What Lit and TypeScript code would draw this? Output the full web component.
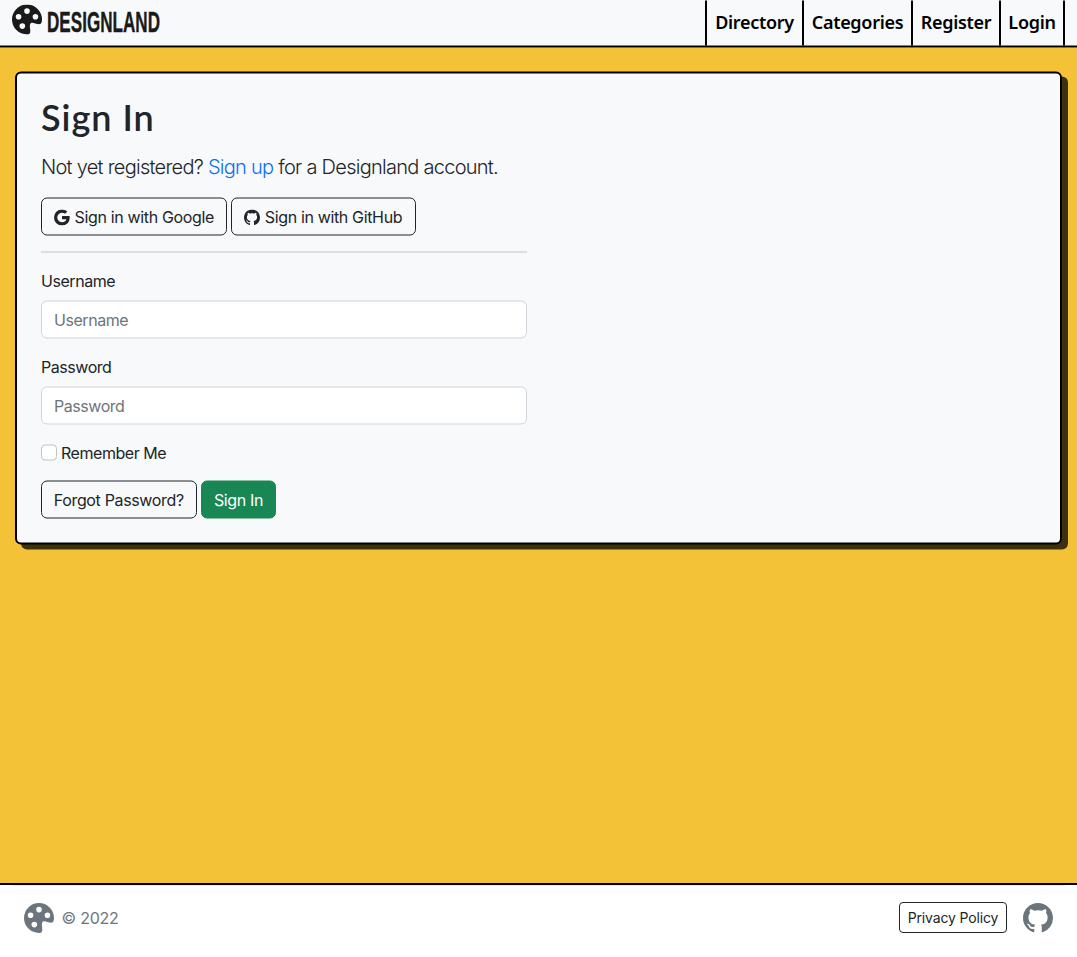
import { LitElement, html, css, svg } from "lit";
import { customElement } from "lit/decorators.js";

const PALETTE = svg`<path d="M12.433 10.07C14.133 10.585 16 11.15 16 8a8 8 0 1 0-8 8c1.996 0 1.826-1.504 1.649-3.08-.124-1.101-.252-2.237.351-2.92.465-.527 1.42-.237 2.433.07zM8 5a1.5 1.5 0 1 1 0-3 1.5 1.5 0 0 1 0 3zm4.5 3a1.5 1.5 0 1 1 0-3 1.5 1.5 0 0 1 0 3zM5 6.5a1.5 1.5 0 1 1-3 0 1.5 1.5 0 0 1 3 0zm.5 6.5a1.5 1.5 0 1 1 0-3 1.5 1.5 0 0 1 0 3z"/>`;
const GITHUB = svg`<path d="M8 0C3.58 0 0 3.58 0 8c0 3.54 2.29 6.53 5.47 7.59.4.07.55-.17.55-.38 0-.19-.01-.82-.01-1.49-2.01.37-2.53-.49-2.69-.94-.09-.23-.48-.94-.82-1.13-.28-.15-.68-.52-.01-.53.63-.01 1.08.58 1.23.82.72 1.21 1.87.87 2.33.66.07-.52.28-.87.51-1.07-1.78-.2-3.64-.89-3.64-3.95 0-.87.31-1.59.82-2.15-.08-.2-.36-1.02.08-2.12 0 0 .67-.21 2.2.82.64-.18 1.32-.27 2-.27.68 0 1.36.09 2 .27 1.53-1.04 2.2-.82 2.2-.82.44 1.1.16 1.92.08 2.12.51.56.82 1.27.82 2.15 0 3.07-1.87 3.75-3.65 3.95.29.25.54.73.54 1.48 0 1.07-.01 1.93-.01 2.2 0 .21.15.46.55.38A8.012 8.012 0 0 0 16 8c0-4.42-3.58-8-8-8z"/>`;
const GOOGLE = svg`<path d="M15.545 6.558a9.42 9.42 0 0 1 .139 1.626c0 2.434-.87 4.492-2.384 5.885h.002C11.978 15.292 10.158 16 8 16A8 8 0 1 1 8 0a7.689 7.689 0 0 1 5.352 2.082l-2.284 2.284A4.347 4.347 0 0 0 8 3.166c-2.087 0-3.86 1.408-4.492 3.304a4.792 4.792 0 0 0 0 3.063h.003c.635 1.893 2.405 3.301 4.492 3.301 1.078 0 2.004-.276 2.722-.764h-.003a3.702 3.702 0 0 0 1.599-2.431H8v-3.08h7.545z"/>`;

const icon = (shape: unknown, size: number) =>
  html`<svg class="icon" width=${size} height=${size} viewBox="0 0 16 16" fill="currentColor" aria-hidden="true">${shape}</svg>`;

@customElement("app-root")
export class AppRoot extends LitElement {
  static styles = css`
    :host {
      display: flex;
      flex-direction: column;
      height: 957px;
      background: #f4c237;
      color: #212529;
      font: 400 16px/24px Inter, "Liberation Sans", sans-serif;
      letter-spacing: -0.45px;
    }
    * { box-sizing: border-box; }
    .icon { display: block; flex: none; }
    a { color: inherit; text-decoration: none; white-space: nowrap; }
    header {
      display: flex;
      justify-content: space-between;
      height: 47px;
      flex: none;
      padding: 0 12px;
      background: #f8f9fa;
      border-bottom: 2px solid #000;
      box-shadow: 0 -1px 0 #f8f9fa;
      transform: translateY(0.5px);
    }
    .brand { display: flex; gap: 5px; padding-top: 4px; color: #1a1a1a; }
    .wordmark { display: block; overflow: visible; }
    .wordmark text {
      font: 700 30px "Liberation Sans Narrow", "Liberation Sans", sans-serif;
      letter-spacing: 0;
      stroke: currentColor;
      stroke-width: 0.4px;
    }
    nav { display: flex; border-left: 2px solid #000; }
    nav a {
      display: flex;
      justify-content: center;
      padding-top: 9px;
      border-right: 2px solid #000;
      color: #000;
      font: 600 18px/24px "Noto Sans", sans-serif;
      letter-spacing: -0.3px;
    }
    .directory { width: 97px; }
    .categories { width: 109px; }
    .register { width: 88px; }
    .login { width: 64px; }
    main { flex: 1; padding: 25px 15px 0; }
    .card {
      height: 473px;
      padding: 22px 24px 0;
      background: #f8f9fa;
      border: 2px solid #000;
      border-radius: 6px;
      box-shadow: 6px 5px 0 rgba(0, 0, 0, 0.75);
      transform: translateY(-0.5px);
    }
    .form { width: 485.5px; }
    h1 { margin: -2px 0 0; font: 600 36px/46px Lato, sans-serif; letter-spacing: 1px; }
    .lead { margin: 12px 0 0; font-size: 20px; font-weight: 300; line-height: 30px; white-space: nowrap; letter-spacing: -0.73px; }
    .lead a { color: #0d6efd; }
    .row { display: flex; gap: 4px; }
    .providers { margin-top: 16px; }
    .btn {
      display: flex;
      align-items: center;
      justify-content: center;
      gap: 4.5px;
      height: 38px;
      border: 1px solid #212529;
      border-radius: 6px;
      letter-spacing: -0.35px;
    }
    .google { width: 186px; }
    .github { width: 184.5px; }
    .forgot { width: 155.5px; }
    .submit { width: 75px; background: #198754; border-color: #198754; color: #fff; }
    .btn .icon { margin-top: 2px; }
    hr { height: 1px; margin: 16px 0; border: 0; background: #c4c6c8; }
    label { display: block; }
    input[type="text"], input[type="password"] {
      display: block;
      width: 100%;
      height: 38px;
      margin: 8px 0 16px;
      padding: 6px 12px;
      border: 1px solid #ced4da;
      border-radius: 6px;
      background: #fff;
      font: inherit;
      letter-spacing: inherit;
    }
    input::placeholder { color: #6c757d; opacity: 1; }
    .check { display: flex; align-items: center; gap: 4px; }
    .check input {
      appearance: none;
      width: 16px;
      height: 16px;
      margin: 0;
      border: 1px solid #bfc1c3;
      border-radius: 4px;
      background: #fff;
    }
    .actions { margin-top: 16px; gap: 4.5px; }
    footer {
      display: flex;
      flex: none;
      height: 74px;
      padding: 0 12px;
      border-top: 2px solid #000;
      background: #fff;
      color: #6c757d;
    }
    .bar {
      display: flex;
      justify-content: space-between;
      align-items: flex-start;
      flex: 1;
      padding: 16px 12px 0;
      border-top: 1px solid #e6e8eb;
    }
    .group { display: flex; align-items: center; gap: 7.5px; height: 31px; letter-spacing: -0.25px; }
    .links { gap: 16px; }
    .policy { width: 108px; height: 31px; border-radius: 4px; color: #212529; font-size: 14px; letter-spacing: -0.15px; }
  `;

  render() {
    return html`
      <header>
        <a class="brand" href="#" aria-label="Designland">
          ${icon(PALETTE, 30)}
          <svg class="wordmark" width="120" height="36" viewBox="0 0 120 36">
            <text x="0" y="27.5" fill="currentColor" textLength="113" lengthAdjust="spacingAndGlyphs">DESIGNLAND</text>
          </svg>
        </a>
        <nav>
          <a class="directory" href="#">Directory</a>
          <a class="categories" href="#">Categories</a>
          <a class="register" href="#">Register</a>
          <a class="login" href="#">Login</a>
        </nav>
      </header>
      <main>
        <section class="card">
          <div class="form">
            <h1>Sign In</h1>
            <p class="lead">Not yet registered? <a href="#">Sign up</a> for a Designland account.</p>
            <div class="row providers">
              <a class="btn google" href="#">${icon(GOOGLE, 16)}<span>Sign in with Google</span></a>
              <a class="btn github" href="#">${icon(GITHUB, 16)}<span>Sign in with GitHub</span></a>
            </div>
            <hr />
            <label for="user">Username</label>
            <input id="user" type="text" placeholder="Username" />
            <label for="pass">Password</label>
            <input id="pass" type="password" placeholder="Password" />
            <label class="check"><input type="checkbox" /><span>Remember Me</span></label>
            <div class="row actions">
              <a class="btn forgot" href="#">Forgot Password?</a>
              <a class="btn submit" href="#">Sign In</a>
            </div>
          </div>
        </section>
      </main>
      <footer>
        <div class="bar">
          <div class="group">${icon(PALETTE, 30)}<span>© 2022</span></div>
          <div class="group links">
            <a class="btn policy" href="#">Privacy Policy</a>
            <a href="#" aria-label="GitHub">${icon(GITHUB, 30)}</a>
          </div>
        </div>
      </footer>
    `;
  }
}
